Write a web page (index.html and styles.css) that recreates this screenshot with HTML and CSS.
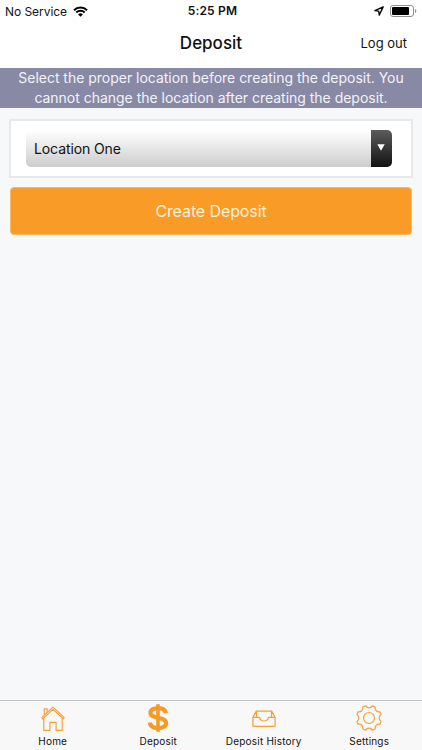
FILE: index.html
```html
<!DOCTYPE html>
<html lang="en">
<head>
    <meta charset="UTF-8">
    <meta name="viewport" content="width=device-width, initial-scale=1.0">
    <title>Deposit</title>
    <link rel="stylesheet" href="styles.css">
</head>
<body>
    <div class="app">
        <div class="status-bar">
            <div class="status-left">
                <span class="carrier">No Service</span>
                <svg class="wifi" width="15" height="11" viewBox="0 0 15 11">
                    <path d="M1 4.3a9.2 9.2 0 0 1 13 0M3.3 6.5a6 6 0 0 1 8.4 0" fill="none" stroke="#000" stroke-width="2"/>
                    <path d="M7.5 10.8L5.1 8.4a3.4 3.4 0 0 1 4.8 0z"/>
                </svg>
            </div>
            <span class="time">5:25 PM</span>
            <div class="status-right">
                <svg width="10" height="10" viewBox="0 0 10 10">
                    <path d="M9.2.9L.9 4.7l3.9.5.4 3.9z" fill="none" stroke="#000" stroke-width="1.3" stroke-linejoin="round"/>
                </svg>
                <svg width="27" height="12" viewBox="0 0 27 12">
                    <rect x=".5" y=".5" width="23" height="11" rx="2.5" fill="none" stroke="#8f8f8f"/>
                    <rect x="2" y="2" width="17" height="8" rx="1"/>
                    <path d="M25 4v4q1.4-.6 1.4-2T25 4z" fill="#8f8f8f"/>
                </svg>
            </div>
        </div>

        <header class="nav-bar">
            <h1>Deposit</h1>
            <a class="logout">Log out</a>
        </header>

        <p class="notice">Select the proper location before creating the deposit. You<br>cannot change the location after creating the deposit.</p>

        <main class="content">
            <div class="card">
                <div class="select">
                    <span class="select-value">Location One</span>
                    <span class="select-arrow">
                        <svg width="8" height="7" viewBox="0 0 8 7"><path d="M.3.3h7.4L4 6.7z" fill="#fff"/></svg>
                    </span>
                </div>
            </div>
            <button class="create">Create Deposit</button>
        </main>

        <nav class="tab-bar">
            <a class="tab">
                <svg width="28" height="30" viewBox="0 0 28 30">
                    <path d="M5.2 11.5V5.8h3v3M2.6 14.6L14 4.1l11.4 10.5M2.6 14.6l1.1 1.2L14 6.4l10.3 9.4 1.1-1.2M4.8 15.1v12.3h6.1v-8.1h6.2v8.1h6.1V15.1"/>
                </svg>
                <span>Home</span>
            </a>
            <a class="tab">
                <svg class="dollar" width="28" height="30" viewBox="0 0 28 30">
                    <path d="M14 1.2v27.6" stroke-width="3.6"/>
                    <path d="M21.8 10.2C21.4 6.8 18.6 5.2 14 5.2c-4.4 0-7.5 1.7-7.5 4.6 0 3.4 3.5 4.1 7.5 5 4.5 1 8.1 1.8 8.1 5.4 0 3.1-3.4 4.8-8.1 4.8-4.9 0-7.8-2-8.2-5.5" stroke-width="4.2"/>
                </svg>
                <span>Deposit</span>
            </a>
            <a class="tab">
                <svg width="28" height="30" viewBox="0 0 28 30">
                    <path d="M2.9 14.4h6.6c.5 2.7 2 3.6 4.5 3.6s4-.9 4.5-3.6h6.6v8.9H2.9zM2.9 14.4l3.4-6.3h15.4l3.4 6.3M6.5 14.2V8.3M21.5 14.2V8.3"/>
                </svg>
                <span>Deposit History</span>
            </a>
            <a class="tab">
                <svg width="28" height="30" viewBox="0 0 28 30">
                    <circle cx="14" cy="15" r="5.5"/>
                    <path d="M10.6 2.9A4 4 0 0 0 17.4 2.9L20.2 4A4 4 0 0 0 25 8.8L26.1 11.6A4 4 0 0 0 26.1 18.4L25 21.2A4 4 0 0 0 20.2 26L17.4 27.1A4 4 0 0 0 10.6 27.1L7.8 26A4 4 0 0 0 3 21.2L1.9 18.4A4 4 0 0 0 1.9 11.6L3 8.8A4 4 0 0 0 7.8 4z"/>
                </svg>
                <span>Settings</span>
            </a>
        </nav>
    </div>
</body>
</html>
```
FILE: styles.css
```css
* {
    box-sizing: border-box;
}

body {
    margin: 0;
    font-family: Inter, "Liberation Sans", sans-serif;
    color: #111;
    background: #f7f8fa;
}

.app {
    display: flex;
    flex-direction: column;
    height: 750px;
}

/* Status bar */
.status-bar {
    display: grid;
    grid-template-columns: 1fr auto 1fr;
    align-items: center;
    height: 22px;
    padding: 0 5px;
    background: #fff;
}

.status-left,
.status-right {
    display: flex;
    align-items: center;
    gap: 6px;
}

.status-right {
    justify-content: flex-end;
}

.carrier {
    font-size: 12px;
    letter-spacing: -0.05px;
}

.time {
    padding: 0 0 1px 3px;
    font-size: 12px;
    font-weight: 600;
    letter-spacing: 0.2px;
}

/* Header */
.nav-bar {
    display: grid;
    grid-template-columns: 1fr auto 1fr;
    align-items: center;
    height: 46px;
    padding: 0 15px 5px;
    background: #fff;
}

.nav-bar h1 {
    grid-column: 2;
    margin: 0;
    font-size: 17px;
    font-weight: 500;
}

.logout {
    justify-self: end;
    font-size: 13px;
}

.notice {
    height: 40px;
    margin: 0;
    background: #8889a5;
    color: #f3f3fa;
    font-size: 14px;
    letter-spacing: -0.02px;
    line-height: 20px;
    text-align: center;
    white-space: nowrap;
}

/* Content */
.content {
    flex: 1;
    padding: 11px 10px 0;
}

.card {
    height: 59px;
    margin: 0 -1px;
    padding: 9px 19px 0 15px;
    border: 2px solid #e6e8ea;
    background: #fff;
}

.select {
    display: flex;
    height: 37px;
    border-radius: 5px;
    overflow: hidden;
    background: linear-gradient(#fff, #ccc);
}

.select-value {
    flex: 1;
    padding-left: 8px;
    font-size: 14px;
    letter-spacing: -0.1px;
    line-height: 38px;
}

.select-arrow {
    display: flex;
    align-items: center;
    justify-content: center;
    width: 21px;
    padding: 0 2px 3px 0;
    background: linear-gradient(#5c5c5c, #111);
}

.create {
    display: block;
    width: 100%;
    height: 48px;
    margin-top: 9px;
    border: 1px solid #fbb765;
    border-radius: 4px;
    background: #f99b27;
    color: #fff0d8;
    font-family: inherit;
    font-size: 16px;
    letter-spacing: -0.1px;
}

/* Bottom tabs */
.tab-bar {
    display: grid;
    grid-template-columns: repeat(4, 1fr);
    height: 50px;
    border-top: 1px solid #c2c2c6;
    background: #f8f8f8;
}

.tab {
    display: flex;
    flex-direction: column;
    align-items: center;
    padding-top: 2px;
    font-size: 10px;
    letter-spacing: 0.2px;
    line-height: 16px;
    white-space: nowrap;
}

.tab svg {
    fill: none;
    stroke: #f4a13a;
    stroke-width: 1.2;
    stroke-linejoin: round;
}

.tab .dollar {
    stroke: #f59a26;
}
```
